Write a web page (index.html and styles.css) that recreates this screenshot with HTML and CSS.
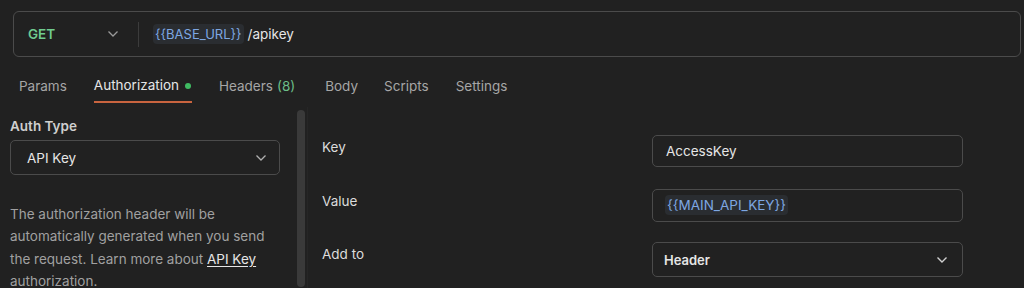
FILE: index.html
```html
<!DOCTYPE html>
<html>
<head>
<meta charset="utf-8">
<link rel="stylesheet" href="styles.css">
</head>
<body>
<div class="urlbar">
  <div class="method">
    <span class="method-name">GET</span>
    <svg class="chev" width="12" height="8" viewBox="0 0 12 8"><path d="M1.5 1.5 L6 6 L10.5 1.5" fill="none" stroke="#9a9a9a" stroke-width="1.3"/></svg>
  </div>
  <div class="divider"></div>
  <div class="url"><span class="var">{{BASE_URL}}</span><span class="path">/apikey</span></div>
</div>
<div class="tabs">
  <div class="tab">Params</div>
  <div class="tab active">Authorization <span class="dot"></span></div>
  <div class="tab">Headers <span class="count">(8)</span></div>
  <div class="tab">Body</div>
  <div class="tab">Scripts</div>
  <div class="tab">Settings</div>
</div>
<div class="content">
  <div class="left">
    <div class="label-bold">Auth Type</div>
    <div class="select">
      <span>API Key</span>
      <svg width="12" height="8" viewBox="0 0 12 8"><path d="M1.5 1.5 L6 6 L10.5 1.5" fill="none" stroke="#b0b0b0" stroke-width="1.3"/></svg>
    </div>
    <p class="desc">The authorization header will be automatically generated when you send the request. Learn more about <a href="#">API Key</a> authorization.</p>
  </div>
  <div class="scroll"><div class="thumb"></div></div>
  <div class="vline"></div>
  <div class="right">
    <div class="row">
      <div class="rlabel">Key</div>
      <div class="field">AccessKey</div>
    </div>
    <div class="row">
      <div class="rlabel">Value</div>
      <div class="field"><span class="var">{{MAIN_API_KEY}}</span></div>
    </div>
    <div class="row">
      <div class="rlabel">Add to</div>
      <div class="field dropdown"><span>Header</span>
        <svg width="12" height="8" viewBox="0 0 12 8"><path d="M1.5 1.5 L6 6 L10.5 1.5" fill="none" stroke="#d0d0d0" stroke-width="1.4"/></svg>
      </div>
    </div>
  </div>
</div>
</body>
</html>
```
FILE: styles.css
```css
html, body {
  margin: 0;
  padding: 0;
  background: #212121;
  height: 288px;
  overflow: hidden;
  font-family: Inter, "Noto Sans", sans-serif;
  color: #e6e6e6;
  font-size: 13.5px;
}
.urlbar {
  margin: 11px 3px 0 13px;
  height: 44px;
  border: 1px solid #4b4b4b;
  border-radius: 6px;
  display: flex;
  align-items: center;
}
.method {
  width: 124px;
  box-sizing: border-box;
  padding: 0 19px 0 14px;
  display: flex;
  align-items: center;
  justify-content: space-between;
}
.method-name {
  color: #6fcb8f;
  font-weight: 600;
  font-size: 13.5px;
}
.divider {
  width: 1px;
  height: 25px;
  background: #3c3c3c;
}
.url {
  padding-left: 14px;
  color: #e6e6e6;
  font-size: 13.5px;
}
.url .var {
  font-size: 13px;
}
.path {
  margin-left: 4px;
}
.var {
  color: #7ea7e2;
  background: #2a2d31;
  border-radius: 4px;
  padding: 2px 2px;
}
.tabs {
  display: flex;
  padding-left: 19px;
  margin-top: 13px;
  height: 33px;
  gap: 27px;
}
.tab {
  color: #a6a6a6;
  font-size: 13.5px;
  line-height: 31px;
  box-sizing: border-box;
  display: flex;
  align-items: center;
  gap: 6px;
}
.tab:nth-child(4) { margin-left: 3px; }
.tab:nth-child(5) { margin-left: -1px; }
.tab.active {
  color: #e6e6e6;
  border-bottom: 2px solid #c9643f;
  height: 33px;
  padding-right: 1px;
}
.dot {
  width: 6px;
  height: 6px;
  border-radius: 50%;
  background: #3fbb62;
  display: inline-block;
}
.count {
  color: #6cbe88;
  margin-left: -2px;
}
.content {
  display: flex;
  margin-top: 4px;
}
.left {
  width: 270px;
  margin-left: 10px;
  padding-top: 10px;
}
.label-bold {
  font-weight: 600;
  color: #cfcfcf;
  font-size: 13.5px;
  line-height: 18px;
}
.select {
  margin-top: 5px;
  height: 35px;
  box-sizing: border-box;
  border: 1px solid #4b4b4b;
  border-radius: 5px;
  display: flex;
  align-items: center;
  justify-content: space-between;
  padding: 0 12px 0 16px;
  color: #e6e6e6;
}
.desc {
  margin: 28px 0 0 0;
  color: #a0a0a0;
  line-height: 22.4px;
  font-size: 13.5px;
}
.desc a {
  color: #e6e6e6;
  text-decoration: underline;
  text-underline-offset: 2px;
}
.scroll {
  margin-left: 17px;
  width: 9px;
  height: 180px;
  padding-top: 3px;
}
.thumb {
  width: 8px;
  height: 177px;
  background: #3a3a3a;
  border-radius: 4px;
}
.vline {
  width: 1px;
  height: 184px;
  background: #262626;
  margin-left: 1px;
}
.right {
  flex: 1;
  padding-top: 28px;
  padding-left: 14px;
}
.row {
  display: flex;
  align-items: flex-start;
  height: 53.5px;
}
.rlabel {
  width: 330px;
  color: #dcdcdc;
  line-height: 24px;
}
.field {
  width: 311px;
  height: 32px;
  box-sizing: border-box;
  border: 1px solid #4b4b4b;
  border-radius: 5px;
  display: flex;
  align-items: center;
  padding: 0 13px;
  color: #e6e6e6;
  margin-top: 0;
}
.row:nth-child(2) .field { height: 33px; padding-left: 12px; }
.field.dropdown {
  height: 35px;
  justify-content: space-between;
  padding: 0 14px 0 11px;
  font-weight: 600;
  font-size: 13px;
}
```
